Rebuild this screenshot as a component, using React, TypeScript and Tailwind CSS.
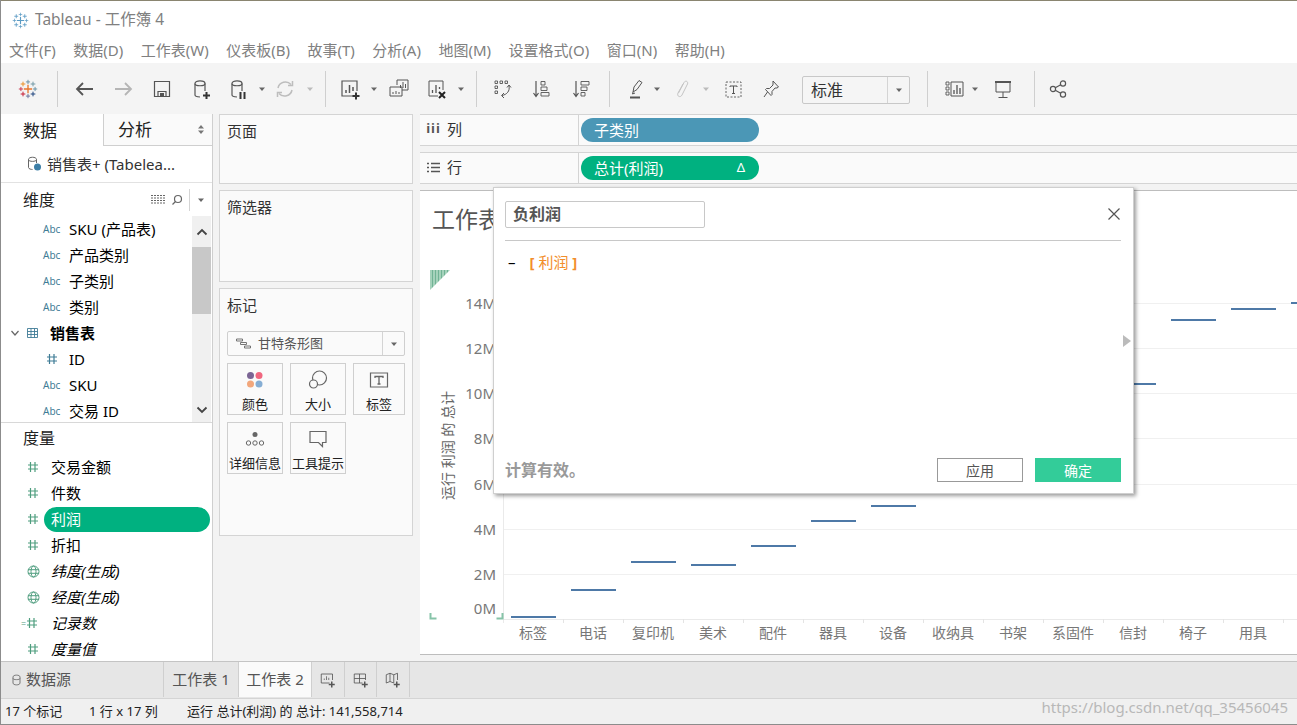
import React from "react";

const S = ({ children, w = 24, h = 24, vb = "0 0 24 24", className = "" }: any) => (
  <svg width={w} height={h} viewBox={vb} fill="none" stroke="#555" strokeWidth={1.2} className={className}>
    {children}
  </svg>
);

const Drop = ({ className = "", color = "#666" }: any) => (
  <svg width="8" height="8" viewBox="0 0 8 8" className={className}>
    <path d="M1 2.500h6L4 6z" fill={color} />
  </svg>
);

const Sep = ({ className = "" }: any) => <div className={`w-px h-[36px] bg-[#cfcfcf] ${className}`} />;

const Plus = ({ x, y, s, c, t = 1 }: any) => (
  <path d={`M${x - s} ${y}H${x + s}M${x} ${y - s}V${y + s}`} stroke={c} strokeWidth={t} fill="none" />
);

const Logo = ({ size = 20, mono = false }: any) => {
  const m = "#5a9bc4";
  return (
    <svg width={size} height={size} viewBox="0 0 24 24">
      <Plus x={12} y={12} s={5} c={mono ? m : "#e8762b"} t={1.6} />
      <Plus x={12} y={3.5} s={2.5} c={mono ? m : "#5b879b"} />
      <Plus x={12} y={20.5} s={2.5} c={mono ? m : "#5b6591"} />
      <Plus x={3.5} y={12} s={2.5} c={mono ? m : "#c72037"} />
      <Plus x={20.5} y={12} s={2.5} c={mono ? m : "#59879b"} />
      <Plus x={6} y={6} s={2.8} c={mono ? m : "#eb912b"} t={1.2} />
      <Plus x={18} y={6} s={2.8} c={mono ? m : "#7099a6"} t={1.2} />
      <Plus x={6} y={18} s={2.8} c={mono ? m : "#c72037"} t={1.2} />
      <Plus x={18} y={18} s={2.8} c={mono ? m : "#1f447e"} t={1.2} />
    </svg>
  );
};

const Cyl = () => (
  <>
    <path d="M6 6.500c0-3.500 10-3.500 10 0V14" />
    <path d="M6 6.500V18c0 1 1.500 1.800 5 2" />
    <path d="M6 6.500c0 3 10 3 10 0" />
  </>
);

const Slot = ({ className = "", children }: any) => (
  <div className={`w-6 h-6 flex items-center justify-center shrink-0 ${className}`}>{children}</div>
);

const Toolbar = () => (
  <div className="h-[51px] bg-[#f4f4f4] flex items-center shrink-0">
    <Slot className="ml-[15px]"><Logo size={20} /></Slot>
    <Sep className="ml-[17px]" />
    <Slot className="ml-[14px]">
      <S><path d="M21 12H5M11 6l-6 6 6 6" stroke="#555" strokeWidth={1.800} /></S>
    </Slot>
    <Slot className="ml-[15px]">
      <S><path d="M4 12h16M14 6l6 6-6 6" stroke="#b5b5b5" strokeWidth={1.800} /></S>
    </Slot>
    <Slot className="ml-[15px]">
      <S><path d="M4.500 4.500h15v15h-15zM8 19.500v-5h8v5" /><path d="M10 16h4v3.500h-4z" fill="#555" stroke="none" /></S>
    </Slot>
    <Slot className="ml-[15px]">
      <S><Cyl /><path d="M14 18.500h7M17.500 15v7" stroke="#333" strokeWidth={2} /></S>
    </Slot>
    <Slot className="ml-[13px]">
      <S><Cyl /><path d="M14.500 15v7M18.500 15v7" stroke="#333" strokeWidth={2} /></S>
    </Slot>
    <Drop className="ml-[8px]" />
    <Slot className="ml-[7px]">
      <S>
        <path d="M5 11a7.500 7.500 0 0 1 13-3.500M19 13a7.500 7.500 0 0 1-13 3.500" stroke="#bdbdbd" strokeWidth={1.500} />
        <path d="M19.500 4v4.500H15M4.500 20v-4.500H9" stroke="#bdbdbd" strokeWidth={1.500} />
      </S>
    </Slot>
    <Drop className="ml-[9px]" color="#bbb" />
    <Sep className="ml-[11px]" />
    <Slot className="ml-[12px]">
      <S><path d="M15 19H4V4h15v10" /><path d="M8 16v-3M11.500 16V8M15 14v-4" strokeWidth={1.500} /><path d="M14.500 19h7M18 15.500v7" stroke="#333" strokeWidth={2} /></S>
    </Slot>
    <Drop className="ml-[8px]" />
    <Slot className="ml-[9px]">
      <S>
        <path d="M10 8V3h11v10h-6" strokeWidth={1} /><path d="M13.500 11V8M16 11V5M18.500 11V7" strokeWidth={1} />
        <path d="M3 10h12v9H3z" strokeWidth={1} /><path d="M6 17v-2M9 17v-3M12 17v-2" strokeWidth={1} />
      </S>
    </Slot>
    <Slot className="ml-[13px]">
      <S><path d="M14 19H5V4h14v9" strokeWidth={1} /><path d="M8.500 16v-3M12 16V8M15.500 12v-2" strokeWidth={1.300} /><path d="M15 15l6 6M21 15l-6 6" stroke="#222" strokeWidth={2} /></S>
    </Slot>
    <Drop className="ml-[9px]" />
    <Sep className="ml-[11px]" />
    <Slot className="ml-[13px]">
      <S>
        <path d="M5 4h2.500v2.500H5zM10 4h2.500v2.500H10zM15 4h2.500v2.500H15zM5 9h2.500v2.500H5zM5 14h2.500v2.500H5z" strokeWidth={0.9} />
        <path d="M19 9c1 5-2 8.500-7 9.500" strokeWidth={1} /><path d="M14 16l-2.500 2.500 2.500 2.500M17 10.500l2-2.500 2 2.500" strokeWidth={1} />
      </S>
    </Slot>
    <Slot className="ml-[15px]">
      <S>
        <path d="M7 4v15M4.500 16l2.500 3.500 2.500-3.500" strokeWidth={1.200} />
        <path d="M12 4.500h4v3.500h-4zM12 10h6v3.500h-6zM12 15.500h8V19h-8z" strokeWidth={0.9} />
      </S>
    </Slot>
    <Slot className="ml-[16px]">
      <S>
        <path d="M7 4v15M4.500 16l2.500 3.500 2.500-3.500" strokeWidth={1.200} />
        <path d="M12 4.500h8V8h-8zM12 10h6v3.500h-6zM12 15.500h4V19h-4z" strokeWidth={0.9} />
      </S>
    </Slot>
    <Sep className="ml-[16px]" />
    <Slot className="ml-[14px]">
      <S>
        <path d="M9 15l1-5 5-6.500 3 2-5 7z" strokeWidth={1} />
        <path d="M9 15l-.5 2 2.500-1" strokeWidth={1} />
        <path d="M6 20.500h10" stroke="#555" strokeWidth={2} />
      </S>
    </Slot>
    <Drop className="ml-[5px]" />
    <Slot className="ml-[9px]">
      <S><path d="M8.500 16L14 5.500c1.500-2.500 4.500-1 3.500 1.500L12 18c-1.500 3-5.500 1.500-4-2L13 7" stroke="#c4c4c4" strokeWidth={1} /></S>
    </Slot>
    <Drop className="ml-[8px]" color="#bbb" />
    <Slot className="ml-[11px]">
      <S>
        <path d="M5 5h15v15H5z" strokeDasharray="2 1.500" strokeWidth={0.9} />
        <path d="M9 10V9h7v1M12.500 9v7.500M11 16.500h3" strokeWidth={1} />
      </S>
    </Slot>
    <Slot className="ml-[14px]">
      <S><path d="M14 4l5.500 6-1.500 1-2 0-3 3.500 0 3-1 1-5.500-6 1-1 3 0 3.500-3.500 0-2zM8.500 15l-3.500 5" strokeWidth={1} /></S>
    </Slot>
    <div className="ml-[19px] mt-[2px] w-[108px] h-[28px] border border-[#c8c8c8] rounded-[2px] flex items-center bg-[#f5f5f5] shrink-0">
      <span className="flex-1 pl-2 text-[16px] text-[#333]">标准</span>
      <div className="w-[22px] h-full border-l border-[#d4d4d4] flex items-center justify-center">
        <Drop />
      </div>
    </div>
    <Sep className="ml-[17px]" />
    <Slot className="ml-[14px]">
      <S>
        <path d="M4 5h3v3H4zM4 10h3v3H4zM4 15h3v3H4z" strokeWidth={0.9} />
        <path d="M9 5h12v14H9z" strokeWidth={1} />
        <path d="M12 17v-4M15 17V8M18 17v-6" strokeWidth={1.300} />
      </S>
    </Slot>
    <Drop className="ml-[5px]" />
    <Slot className="ml-[12px]">
      <S>
        <path d="M4 5h16" strokeWidth={2} /><path d="M5 5v10h14V5M12 15v5M7.500 20.500h9" strokeWidth={1} />
      </S>
    </Slot>
    <Sep className="ml-[19px]" />
    <Slot className="ml-[11px]">
      <S>
        <circle cx="7" cy="12" r="2.600" /><circle cx="17" cy="6.500" r="2.600" /><circle cx="17" cy="17.500" r="2.600" />
        <path d="M9.300 10.700l5.400-3M9.300 13.300l5.400 3" />
      </S>
    </Slot>
  </div>
);

const Abc = () => <span className="w-[26px] ml-[42px] text-[10px] text-[#3f7c96] shrink-0">Abc</span>;

const Hash = ({ c = "#4f9e7f" }: any) => (
  <svg width="12" height="12" viewBox="0 0 12 12" fill="none" stroke={c} strokeWidth={1.200}>
    <path d="M3.500 1v10M8 1v10M1 4h10M1 8h10" />
  </svg>
);

const Globe = () => (
  <svg width="13" height="13" viewBox="0 0 13 13" fill="none" stroke="#4f9e7f" strokeWidth={1}>
    <circle cx="6.500" cy="6.500" r="5.500" />
    <ellipse cx="6.500" cy="6.500" rx="2.500" ry="5.500" />
    <path d="M1 4.700h11M1 8.300h11" />
  </svg>
);

const DimRow = ({ t }: any) => (
  <div className="h-[26px] flex items-center text-[15px] text-black whitespace-nowrap">
    <Abc />
    <span>{t}</span>
  </div>
);

const MeasRow = ({ t, i = false, icon, pill = false }: any) => (
  <div className="h-[26px] flex items-center text-[15px] text-black shrink-0">
    <div className="w-[14px] ml-[25px] flex justify-center shrink-0">{icon ?? <Hash />}</div>
    {pill ? (
      <div className="ml-[4px] w-[166px] h-[25px] rounded-full bg-[#00b180] text-white flex items-center pl-[7px]">{t}</div>
    ) : (
      <span className={`ml-[11px] ${i ? "italic" : ""}`}>{t}</span>
    )}
  </div>
);

const DataPane = () => (
  <div className="w-[212px] bg-white border-r border-[#cfcfcf] flex flex-col shrink-0 overflow-hidden">
    <div className="h-[32px] flex text-[17px] text-[#222] shrink-0">
      <div className="w-[102px] flex items-center justify-center pr-[24px] pt-[2px]">数据</div>
      <div className="flex-1 bg-[#fafafa] border-l border-b border-[#cfcfcf] flex items-center pl-[14px] justify-between pr-[7px]">
        <span>分析</span>
        <svg width="8" height="11" viewBox="0 0 8 11"><path d="M4 1l3 3.500H1zM4 10L1 6.500h6z" fill="#777" /></svg>
      </div>
    </div>
    <div className="h-[37px] flex items-center border-b border-[#e2e2e2] shrink-0 text-[15px] text-[#333]">
      <svg width="15" height="16" viewBox="0 0 15 16" className="ml-[26px]" fill="none" stroke="#666">
        <path d="M1.500 3.500v8c0 1.500 3 2 4 2M1.500 3.500c0-3 8-3 8 0V7M1.500 3.500c0 2.500 8 2.500 8 0" />
        <circle cx="10.500" cy="11" r="3.500" fill="#3c7ea6" stroke="none" />
      </svg>
      <span className="ml-[5px] whitespace-nowrap">销售表+ (Tabelea...</span>
    </div>
    <div className="h-[33px] flex items-center shrink-0">
      <span className="ml-[22px] text-[16px] text-[#222]">维度</span>
      <svg width="14" height="11" viewBox="0 0 14 11" className="ml-[96px]" stroke="#666" fill="none">
        <path d="M0 1.500h14M0 4h14M0 6.500h14M0 9h14" strokeDasharray="2 1" />
      </svg>
      <svg width="12" height="12" viewBox="0 0 12 12" className="ml-[6px]" fill="none" stroke="#666" strokeWidth={1.200}>
        <circle cx="7" cy="5" r="3.500" /><path d="M4.500 7.500L1.500 10.500" />
      </svg>
      <div className="w-px h-[22px] bg-[#d4d4d4] ml-[6px]" />
      <Drop className="ml-[7px]" />
    </div>
    <div className="h-[206px] flex shrink-0">
      <div className="flex-1 overflow-hidden">
        <DimRow t="SKU (产品表)" />
        <DimRow t="产品类别" />
        <DimRow t="子类别" />
        <DimRow t="类别" />
        <div className="h-[26px] flex items-center text-[15px] font-bold text-black">
          <svg width="10" height="10" viewBox="0 0 10 10" className="ml-[9px]" fill="none" stroke="#666" strokeWidth={1.200}><path d="M1.500 3L5 7l3.500-4" /></svg>
          <svg width="11" height="10" viewBox="0 0 11 10" className="ml-[7px]" fill="none" stroke="#3f7c96"><path d="M.5.500h10v9H.5zM.5 3.500h10M.5 6.500h10M4 .5v9M7.500.5v9" strokeWidth={0.9} /></svg>
          <span className="ml-[12px]">销售表</span>
        </div>
        <div className="h-[26px] flex items-center text-[15px] text-black">
          <div className="w-[26px] ml-[42px] pl-[3px]"><Hash c="#3f7c96" /></div>
          <span>ID</span>
        </div>
        <DimRow t="SKU" />
        <DimRow t="交易 ID" />
      </div>
      <div className="w-[19px] mr-px bg-[#f0f0f0] flex flex-col items-center shrink-0">
        <div className="h-[31px] flex items-center justify-center">
          <svg width="12" height="8" viewBox="0 0 12 8" fill="none" stroke="#444" strokeWidth={1.800}><path d="M1.500 6.500L6 2l4.500 4.500" /></svg>
        </div>
        <div className="w-full h-[67px] bg-[#c8c8c8]" />
        <div className="flex-1" />
        <div className="h-[24px] flex items-center justify-center">
          <svg width="12" height="8" viewBox="0 0 12 8" fill="none" stroke="#444" strokeWidth={1.800}><path d="M1.500 1.500L6 6l4.500-4.500" /></svg>
        </div>
      </div>
    </div>
    <div className="h-[32px] flex items-center border-t border-[#d8d8d8] shrink-0 pb-[1px]">
      <span className="ml-[22px] text-[16px] text-[#222]">度量</span>
    </div>
    <MeasRow t="交易金额" />
    <MeasRow t="件数" />
    <MeasRow t="利润" pill />
    <MeasRow t="折扣" />
    <MeasRow t="纬度(生成)" i icon={<Globe />} />
    <MeasRow t="经度(生成)" i icon={<Globe />} />
    <MeasRow t="记录数" i icon={<div className="flex items-center -ml-[7px]"><span className="text-[#4f9e7f] text-[9px] leading-none">=</span><Hash /></div>} />
    <MeasRow t="度量值" i />
  </div>
);

const MarkBtn = ({ t, icon }: any) => (
  <div className="h-[52px] border border-[#cfcfcf] flex flex-col items-center justify-end text-[13px] text-[#222] whitespace-nowrap bg-[#fafafa]">
    <div className="h-[28px] flex items-center justify-center">{icon}</div>
    <span className="leading-[20px]">{t}</span>
  </div>
);

const Card = ({ t, className = "", children }: any) => (
  <div className={`bg-[#fafafa] border border-[#d4d4d4] px-[7px] text-[15px] text-[#333] shrink-0 ${className}`}>
    <div className="h-[32px] flex items-center">{t}</div>
    {children}
  </div>
);

const MiddleCol = () => (
  <div className="w-[194px] ml-[6px] flex flex-col gap-[6px] shrink-0">
    <Card t="页面" className="h-[70px]" />
    <Card t="筛选器" className="h-[92px]" />
    <Card t="标记" className="h-[248px]">
      <div className="mt-[10px] h-[25px] border border-[#cfcfcf] rounded-[2px] flex items-center text-[13px] text-[#555] bg-[#fafafa]">
        <svg width="16" height="11" viewBox="0 0 16 11" className="ml-[8px]" fill="none" stroke="#666"><path d="M.5 1h6v2h-6zM4.500 4.500h6v2h-6zM8.500 8h6v2h-6z" strokeWidth={0.9} /></svg>
        <span className="ml-[6px] flex-1">甘特条形图</span>
        <div className="w-[22px] h-full border-l border-[#d4d4d4] flex items-center justify-center"><Drop /></div>
      </div>
      <div className="grid grid-cols-[56px_56px_52px] gap-x-[7px] gap-y-[7px] mt-[7px]">
        <MarkBtn t="颜色" icon={
          <svg width="18" height="18" viewBox="0 0 18 18">
            <circle cx="4.500" cy="4.500" r="3.500" fill="#7b6594" /><circle cx="13" cy="4.500" r="3.500" fill="#f0677f" />
            <circle cx="4.500" cy="13" r="3.500" fill="#f2a77c" /><circle cx="13" cy="13" r="3.500" fill="#86aed4" />
          </svg>} />
        <MarkBtn t="大小" icon={
          <svg width="20" height="20" viewBox="0 0 20 20" fill="none" stroke="#666" strokeWidth={1.200}>
            <circle cx="11.500" cy="8" r="7" /><circle cx="5.500" cy="14" r="4" fill="#fafafa" />
          </svg>} />
        <MarkBtn t="标签" icon={
          <svg width="20" height="18" viewBox="0 0 20 18" fill="none" stroke="#666" strokeWidth={1.200}>
            <path d="M1.500 2h17v14h-17z" /><path d="M6 7V5.500h8V7M10 5.500V13M8.500 13h3" strokeWidth={1.300} />
          </svg>} />
        <MarkBtn t="详细信息" icon={
          <svg width="20" height="16" viewBox="0 0 20 16" fill="none" stroke="#666" strokeWidth={1}>
            <circle cx="10" cy="3.500" r="2.500" fill="#666" stroke="none" />
            <circle cx="3.500" cy="12" r="2.200" /><circle cx="10" cy="12" r="2.200" /><circle cx="16.500" cy="12" r="2.200" />
          </svg>} />
        <MarkBtn t="工具提示" icon={
          <svg width="20" height="18" viewBox="0 0 20 18" fill="none" stroke="#666" strokeWidth={1.200}>
            <path d="M2 1.500h16v11h-3.500v4l-4-4H2z" />
          </svg>} />
      </div>
    </Card>
  </div>
);

const Shelf = ({ icon, t, pill }: any) => (
  <div className="h-[32px] bg-[#fafafa] border-y border-[#d4d4d4] flex items-stretch shrink-0">
    <div className="w-[159px] flex items-center text-[15px] text-[#333] border-r border-[#d4d4d4] shrink-0 pb-[2px]">
      <span className="w-[13px] ml-[7px] flex justify-center">{icon}</span>
      <span className="ml-[7px]">{t}</span>
    </div>
    <div className="flex items-center ml-[2px]">{pill}</div>
  </div>
);

const cols = ["标签", "电话", "复印机", "美术", "配件", "器具", "设备", "收纳具", "书架", "系固件", "信封", "椅子", "用具"];
const bars: [number, number][] = [[0, 617], [1, 590], [2, 562], [3, 565], [4, 546], [5, 521], [6, 506], [10, 384], [11, 320], [12, 309], [13, 303]];
const ticks: [string, number][] = [["14M", 303], ["12M", 348], ["10M", 393], ["8M", 438], ["6M", 484], ["4M", 529], ["2M", 574], ["0M", 608]];

const Chart = () => (
  <svg width="877" height="463" viewBox="420 191 877 463" className="block">
    <defs>
      <pattern id="hatch" width="3" height="3" patternUnits="userSpaceOnUse">
        <rect width="3" height="3" fill="#a5d2bb" />
        <rect width="1" height="3" fill="#71b395" />
      </pattern>
    </defs>
    <text x="432" y="228" fontSize="23" fill="#555">工作表 2</text>
    <path d="M430 270h20l-20 20z" fill="url(#hatch)" />
    {[303, 348, 393, 438, 484, 529, 574].map((y) => (
      <path key={y} d={`M503 ${y + 0.5}H1297`} stroke="#f0f0f0" />
    ))}
    <path d="M503.500 191V623M503 619.500H1297" stroke="#eaeaea" />
    {cols.map((_, i) => (
      <path key={i} d={`M${563.5 + i * 60} 619V623`} stroke="#e4e4e4" />
    ))}
    {ticks.map(([t, y]) => (
      <text key={t} x="496" y={y + 6} textAnchor="end" fontSize="15" fill="#777">{t}</text>
    ))}
    <text x="0" y="0" fontSize="14" fill="#666" transform="translate(453 500) rotate(-90)">运行 利润 的 总计</text>
    {cols.map((c, i) => (
      <text key={c} x={533 + i * 60} y="638" textAnchor="middle" fontSize="14" fill="#777">{c}</text>
    ))}
    {bars.map(([k, y]) => (
      <rect key={k} x={511 + k * 60} y={y - 1} width="45" height="2" fill="#4e79a7" />
    ))}
    <path d="M430.500 613v5.500h6M502.500 613v5.500h-6" stroke="#86c3a8" strokeWidth="2" fill="none" />
  </svg>
);

const Dialog = () => (
  <div className="absolute left-[73px] top-[-4px] w-[641px] h-[307px] bg-white border border-[#cfcfcf] shadow-[2px_2px_4px_rgba(0,0,0,0.4)] flex flex-col pl-[11px] pr-[12px]">
    <div className="flex items-center justify-between pt-[12px] h-[53px] border-b border-[#c8c8c8] pb-[12px] shrink-0">
      <div className="w-[200px] h-[27px] border border-[#c8c8c8] rounded-[2px] flex items-center pl-[7px] text-[16px] font-bold text-[#555]">负利润</div>
      <svg width="14" height="14" viewBox="0 0 14 14" stroke="#555" strokeWidth={1.200}><path d="M1.500 1.500l11 11M12.500 1.500l-11 11" /></svg>
    </div>
    <div className="flex items-center mt-[11px] h-[20px] text-[15px] shrink-0">
      <span className="text-black ml-[3px]">–</span>
      <span className="ml-[14px] text-[#f28e2b]"><b>[</b> 利润 <b>]</b></span>
    </div>
    <div className="flex-1" />
    <div className="flex items-center h-[24px] mb-[11px] shrink-0">
      <span className="text-[16px] font-bold text-[#999]">计算有效。</span>
      <div className="flex-1" />
      <div className="w-[86px] h-[24px] border border-[#999] flex items-center justify-center text-[14px] text-[#555]">应用</div>
      <div className="w-[86px] h-[24px] ml-[12px] bg-[#33cc99] flex items-center justify-center text-[14px] text-white">确定</div>
    </div>
    <svg width="8" height="12" viewBox="0 0 8 12" className="absolute right-[2px] top-[147px]"><path d="M0 0l8 6-8 6z" fill="#bbb" /></svg>
  </div>
);

const TabIcon = ({ children, className = "" }: any) => (
  <div className={`h-full border-r border-[#cfcfcf] flex items-center justify-center shrink-0 ${className}`}>{children}</div>
);

export default function App() {
  return (
    <div className="w-[1297px] h-[725px] relative overflow-hidden flex flex-col bg-white border-l border-[#8c8c8c] font-['Noto_Sans','Noto_Sans_CJK_SC',sans-serif]">
      <div className="h-px bg-[#8a8570] -ml-px shrink-0" />
      <div className="h-[34px] flex items-center shrink-0 pt-[4px]">
        <div className="ml-[11px]"><Logo size={17} mono /></div>
        <span className="ml-[6px] text-[15.5px] text-[#808080]">Tableau - 工作簿 4</span>
      </div>
      <div className="h-[28px] flex items-center gap-[17.5px] pl-[8px] pt-[3px] text-[15px] text-[#808080] shrink-0">
        {["文件(F)", "数据(D)", "工作表(W)", "仪表板(B)", "故事(T)", "分析(A)", "地图(M)", "设置格式(O)", "窗口(N)", "帮助(H)"].map((m) => (
          <span key={m}>{m}</span>
        ))}
      </div>
      <Toolbar />
      <div className="flex-1 flex bg-[#f3f3f3] min-h-0">
        <DataPane />
        <MiddleCol />
        <div className="flex-1 ml-[7px] flex flex-col gap-[6px] min-w-0 pb-[6px]">
          <Shelf
            icon={<span className="text-[13px] font-bold text-[#555] tracking-[1px]">iii</span>}
            t="列"
            pill={<div className="w-[178px] h-[24px] rounded-full bg-[#4b97b6] text-white text-[15px] flex items-center pl-[13px]">子类别</div>}
          />
          <Shelf
            icon={
              <svg width="13" height="11" viewBox="0 0 13 11" stroke="#555" strokeWidth={1.300} fill="none">
                <path d="M0 1.500h2M4 1.500h9M0 5.500h2M4 5.500h9M0 9.500h2M4 9.500h9" />
              </svg>
            }
            t="行"
            pill={
              <div className="w-[178px] h-[24px] rounded-full bg-[#00b180] text-white text-[15px] flex items-center justify-between pl-[13px] pr-[14px]">
                <span>总计(利润)</span>
                <span className="text-[13px]">Δ</span>
              </div>
            }
          />
          <div className="flex-1 bg-white border-y border-[#bdbdbd] relative min-h-0">
            <Chart />
            <Dialog />
          </div>
        </div>
      </div>
      <div className="h-[37px] bg-[#e6e6e6] border-t border-[#c4c4c4] flex items-stretch shrink-0 text-[15px] text-[#555] pb-[1px]">
        <div className="w-[163px] flex items-center border-r border-[#cfcfcf] shrink-0">
          <svg width="9" height="12" viewBox="0 0 9 12" className="ml-[11px]" fill="none" stroke="#777"><path d="M1 3c0-2.500 7-2.500 7 0v6c0 2.500-7 2.500-7 0zM1 4.500c0 1.500 7 1.500 7 0" /></svg>
          <span className="ml-[5px]">数据源</span>
        </div>
        <div className="w-[75px] flex items-center justify-center border-r border-[#cfcfcf] shrink-0 whitespace-nowrap">工作表 1</div>
        <div className="w-[73px] flex items-center justify-center bg-[#fafafa] border-r border-[#cfcfcf] shrink-0 whitespace-nowrap">工作表 2</div>
        <TabIcon className="w-[33px]">
          <S w={18} h={18}><path d="M14 16H3V4h15v8" strokeWidth={1.100} /><path d="M7 12v-2M10 12V7M13 12V9" strokeWidth={1} /><path d="M13 18h8M17 14v8" stroke="#555" strokeWidth={2} /></S>
        </TabIcon>
        <TabIcon className="w-[32px]">
          <S w={18} h={18}><path d="M14 16H3V4h15v8M3 10h15M10 4v12" strokeWidth={1.100} /><path d="M13 18h8M17 14v8" stroke="#555" strokeWidth={2} /></S>
        </TabIcon>
        <TabIcon className="w-[33px]">
          <S w={18} h={18}><path d="M3 5l5-2 5 2 5-2v9M13 16l-5-2-5 2V5M8 3v11M13 5v11" strokeWidth={1.100} /><path d="M13 18h8M17 14v8" stroke="#555" strokeWidth={2} /></S>
        </TabIcon>
      </div>
      <div className="h-[27px] bg-[#f0f0f0] border-t border-[#d4d4d4] border-b border-b-[#8c8c8c] flex items-center text-[13px] text-[#222] shrink-0 relative">
        <span className="ml-[4px] w-[84px]">17 个标记</span>
        <span className="w-[98px]">1 行 x 17 列</span>
        <span>运行 总计(利润) 的 总计: 141,558,714</span>
        <span className="absolute right-[9px] top-[-3px] text-[15px] text-[#b8b8b8]">https://blog.csdn.net/qq_35456045</span>
      </div>
    </div>
  );
}
